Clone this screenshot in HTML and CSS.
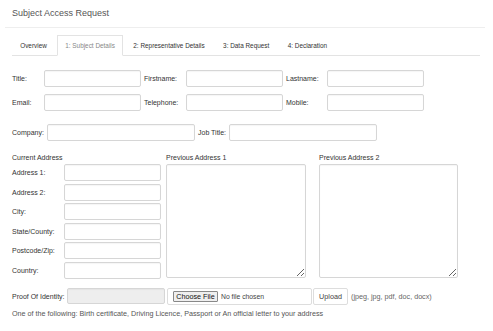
FILE: index.html
```html
<!DOCTYPE html>
<html lang="en">
<head>
<meta charset="utf-8">
<title>Subject Access Request</title>
<link rel="stylesheet" href="styles.css">
</head>
<body>
<div class="page-header"><h1 class="page-title">Subject Access Request</h1></div>
<ul class="tabs">
  <li class="tab">Overview</li>
  <li class="tab active">1: Subject Details</li>
  <li class="tab">2: Representative Details</li>
  <li class="tab">3: Data Request</li>
  <li class="tab">4: Declaration</li>
</ul>
<form class="form">
  <div class="row">
    <div class="field"><label class="lbl w-title">Title:</label><input class="ctl w-std" type="text"></div>
    <div class="field"><label class="lbl w-first">Firstname:</label><input class="ctl w-std" type="text"></div>
    <div class="field"><label class="lbl w-last">Lastname:</label><input class="ctl w-std" type="text"></div>
  </div>
  <div class="row">
    <div class="field"><label class="lbl w-title">Email:</label><input class="ctl w-std" type="text"></div>
    <div class="field"><label class="lbl w-first">Telephone:</label><input class="ctl w-std" type="text"></div>
    <div class="field"><label class="lbl w-last">Mobile:</label><input class="ctl w-std" type="text"></div>
  </div>
  <div class="row row-company">
    <div class="field"><label class="lbl w-company">Company:</label><input class="ctl w-wide" type="text"></div>
    <div class="field"><label class="lbl w-job">Job Title:</label><input class="ctl w-wide" type="text"></div>
  </div>
  <div class="addr">
    <div class="addr-col col-current">
      <div class="addr-head">Current Address</div>
      <div class="addr-grid">
        <label class="lbl">Address 1:</label><input class="ctl" type="text">
        <label class="lbl">Address 2:</label><input class="ctl" type="text">
        <label class="lbl">City:</label><input class="ctl" type="text">
        <label class="lbl">State/County:</label><input class="ctl" type="text">
        <label class="lbl">Postcode/Zip:</label><input class="ctl" type="text">
        <label class="lbl">Country:</label><input class="ctl" type="text">
      </div>
    </div>
    <div class="addr-col col-prev1">
      <div class="addr-head">Previous Address 1</div>
      <textarea class="ctl area"></textarea>
    </div>
    <div class="addr-col col-prev2">
      <div class="addr-head">Previous Address 2</div>
      <textarea class="ctl area"></textarea>
    </div>
  </div>
  <div class="row row-proof">
    <label class="lbl w-proof">Proof Of Identity:</label>
    <input class="ctl w-proofin" type="text" disabled>
    <div class="file-box"><span class="file-btn">Choose File</span><span class="file-name">No file chosen</span></div>
    <button class="upload" type="button">Upload</button>
    <span class="types">(jpeg, jpg, pdf, doc, docx)</span>
  </div>
  <p class="help">One of the following: Birth certificate, Driving Licence, Passport or An official letter to your address</p>
</form>
</body>
</html>
```

FILE: styles.css
```css
* { box-sizing: border-box; }
html, body { margin: 0; padding: 0; background: #fff; }
body {
  font-family: "Liberation Sans", Arial, sans-serif;
  font-size: 7px;
  color: #333;
  width: 493px;
  height: 331px;
  overflow: hidden;
}
.page-header {
  margin: 0 8px 0 5px;
  height: 28px;
  border-bottom: 1px solid #eee;
}
.page-title {
  margin: 0;
  padding: 8px 7px 0;
  font-size: 9px;
  line-height: 11px;
  font-weight: normal;
  color: #555;
}
.tabs {
  list-style: none;
  margin: 7px 13px 0 12px;
  padding: 0;
  display: flex;
  border-bottom: 1px solid #e3e3e3;
  font-size: 6.4px;
}
.tab {
  padding: 0 7.2px;
  line-height: 19px;
  border: 1px solid transparent;
  border-bottom: 0;
  margin-right: 2px;
  color: #333;
}
.tab.active {
  border: 1px solid #e3e3e3;
  border-bottom-color: #fff;
  background: #fff;
  margin-bottom: -1px;
  color: #888;
}
.form { margin: 14px 0 0 12px; }
.row { display: flex; align-items: center; height: 17px; margin-bottom: 7px; }
.row-company { margin-top: 13px; margin-bottom: 0; }
.field { display: flex; align-items: center; margin-right: 3px; }
.lbl { color: #333; white-space: nowrap; }
.ctl {
  display: block;
  height: 17px;
  margin: 0;
  padding: 0 4px;
  border: 1px solid #d6d6d6;
  border-radius: 2px;
  background: #fff;
  box-shadow: inset 0 1px 1px rgba(0,0,0,0.04);
  font: inherit;
}
.w-std { width: 97px; }
.w-title { width: 32px; }
.w-first { width: 42px; }
.w-last { width: 41px; }
.w-company { width: 35px; }
.w-job { width: 31px; }
.w-wide { width: 148px; }
.addr { display: flex; margin-top: 12px; }
.addr-head { line-height: 9px; height: 9px; margin-bottom: 2px; color: #333; white-space: nowrap; }
.col-current { width: 150px; margin-right: 4px; }
.col-prev1 { width: 140px; margin-right: 13px; }
.col-prev2 { width: 139px; }
.addr-grid {
  display: grid;
  grid-template-columns: 52px 97px;
  grid-auto-rows: 17px;
  row-gap: 2.6px;
  align-items: center;
}
.area { width: 100%; height: 114px; resize: both; }
.row-proof { margin-top: 9px; margin-bottom: 0; height: 17px; }
.w-proof { width: 55px; }
.w-proofin { width: 98px; height: 16px; background: #eee; margin-right: 2px; }
.file-box {
  width: 145px;
  height: 17px;
  border: 1px solid #ddd;
  border-radius: 2px;
  display: flex;
  align-items: center;
  padding-left: 5px;
  margin-right: 1px;
}
.file-btn {
  display: block;
  width: 45px;
  height: 11px;
  line-height: 9px;
  text-align: center;
  border: 1px solid #888;
  border-radius: 1px;
  background: #efefef;
  color: #111;
  font-size: 7.2px;
  margin-right: 3px;
}
.file-name { color: #444; font-size: 6.8px; }
.upload {
  width: 35px;
  height: 17px;
  border: 1px solid #ddd;
  border-radius: 2px;
  background: #fff;
  color: #444;
  font: inherit;
  font-size: 7.2px;
  padding: 0;
  margin-right: 3px;
}
.types { color: #666; font-size: 7.2px; }
.help { margin: 4px 0 0; font-size: 7.2px; line-height: 9px; color: #555; }
```
